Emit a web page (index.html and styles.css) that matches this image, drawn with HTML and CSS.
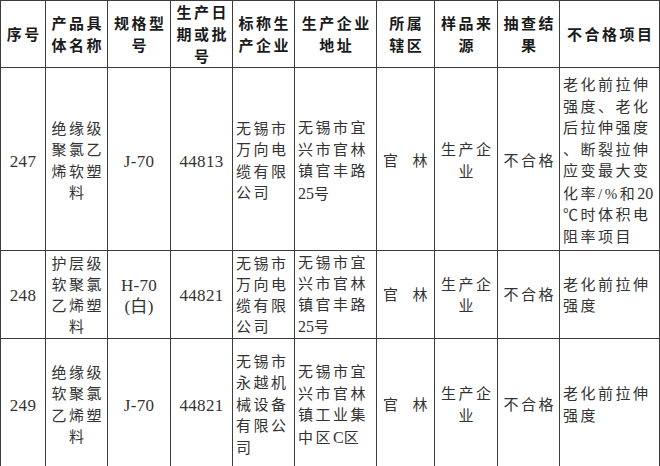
FILE: index.html
```html
<!DOCTYPE html>
<html lang="zh-CN">
<head>
<meta charset="utf-8">
<title>抽查结果</title>
<link rel="stylesheet" href="styles.css">
</head>
<body>
<table class="grid">
  <colgroup>
    <col class="c1"><col class="c2"><col class="c3"><col class="c4"><col class="c5">
    <col class="c6"><col class="c7"><col class="c8"><col class="c9"><col class="c10">
  </colgroup>
  <thead>
    <tr class="r-head">
      <th>序号</th>
      <th>产品具<br>体名称</th>
      <th>规格型<br>号</th>
      <th>生产日<br>期或批<br>号</th>
      <th>标称生<br>产企业</th>
      <th>生产企业<br>地址</th>
      <th>所属<br>辖区</th>
      <th>样品来<br>源</th>
      <th>抽查结<br>果</th>
      <th>不合格项目</th>
    </tr>
  </thead>
  <tbody>
    <tr class="r1">
      <td class="num">247</td>
      <td class="mid">绝缘级<br>聚氯乙<br>烯软塑<br>料</td>
      <td class="num">J-70</td>
      <td class="num">44813</td>
      <td class="left">无锡市<br>万向电<br>缆有限<br>公司</td>
      <td class="left">无锡市宜<br>兴市官林<br>镇官丰路<br><span class="lat">25</span>号</td>
      <td><div class="area"><span>官</span><span>林</span></div></td>
      <td class="mid">生产企<br>业</td>
      <td class="mid">不合格</td>
      <td class="left">老化前拉伸<br>强度、老化<br>后拉伸强度<br>、断裂拉伸<br>应变最大变<br>化率/%和<span class="lat">20</span><br>℃时体积电<br>阻率项目</td>
    </tr>
    <tr class="r2">
      <td class="num">248</td>
      <td class="mid">护层级<br>软聚氯<br>乙烯塑<br>料</td>
      <td class="num">H-70<br>(白)</td>
      <td class="num">44821</td>
      <td class="left">无锡市<br>万向电<br>缆有限<br>公司</td>
      <td class="left">无锡市宜<br>兴市官林<br>镇官丰路<br><span class="lat">25</span>号</td>
      <td><div class="area"><span>官</span><span>林</span></div></td>
      <td class="mid">生产企<br>业</td>
      <td class="mid">不合格</td>
      <td class="left">老化前拉伸<br>强度</td>
    </tr>
    <tr class="r3">
      <td class="num">249</td>
      <td class="mid">绝缘级<br>软聚氯<br>乙烯塑<br>料</td>
      <td class="num">J-70</td>
      <td class="num">44821</td>
      <td class="left">无锡市<br>永越机<br>械设备<br>有限公<br>司</td>
      <td class="left">无锡市宜<br>兴市官林<br>镇工业集<br>中区<span class="lat">C</span>区</td>
      <td><div class="area"><span>官</span><span>林</span></div></td>
      <td class="mid">生产企<br>业</td>
      <td class="mid">不合格</td>
      <td class="left">老化前拉伸<br>强度</td>
    </tr>
  </tbody>
</table>
</body>
</html>
```

FILE: styles.css
```css
html, body {
  margin: 0;
  padding: 0;
  background: #ffffff;
}

.grid {
  table-layout: fixed;
  width: 660px;
  border-collapse: separate;
  border-spacing: 1px;
  background: #3c3c3c;
  font-family: "Liberation Serif", "Noto Sans CJK SC", serif;
  color: #333333;
}

.c1 { width: 44px; }
.c2 { width: 61px; }
.c3 { width: 62px; }
.c4 { width: 61px; }
.c5 { width: 61px; }
.c6 { width: 81px; }
.c7 { width: 57px; }
.c8 { width: 62px; }
.c9 { width: 61px; }
.c10 { width: 99px; }

.grid th,
.grid td {
  background: #ffffff;
  padding: 0;
  vertical-align: middle;
  overflow: hidden;
}

.grid th {
  font-family: "Noto Sans CJK SC", sans-serif;
  font-size: 15px;
  font-weight: 700;
  letter-spacing: 2.5px;
  line-height: 22px;
  text-align: center;
  padding-left: 2.5px;
  color: #1a1a1a;
}

.grid td {
  font-size: 15px;
  line-height: 21.5px;
  letter-spacing: 2.5px;
}

.r-head { height: 64px; }
.r1 { height: 182px; }
.r2 { height: 86px; }
.r3 { height: 128px; }

.r1 td,
.r3 td {
  padding-top: 5px;
}

.r2 td {
  padding-top: 2px;
  line-height: 21px;
}

.grid td.num {
  font-size: 17px;
  letter-spacing: 0.3px;
  text-align: center;
}

.grid td.mid {
  text-align: center;
  padding-left: 2.5px;
}

.grid td.left {
  text-align: left;
  padding-left: 3px;
}

.lat {
  font-size: 16px;
  letter-spacing: 0;
}

.area {
  display: flex;
  justify-content: space-between;
  padding: 0 4px 0 6px;
}
```
